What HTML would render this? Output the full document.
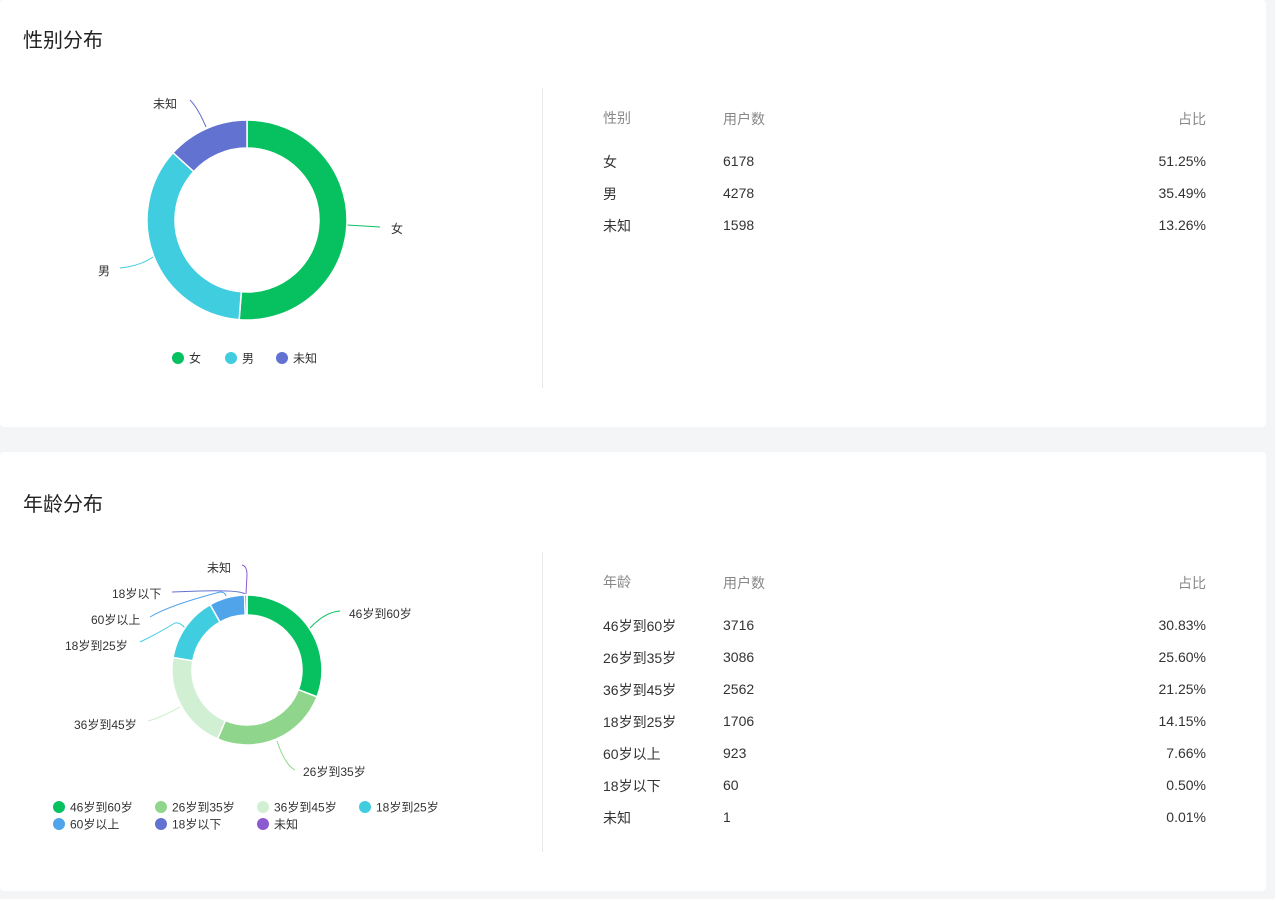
<!DOCTYPE html><html><head><meta charset="utf-8"><style>
body{margin:0;background:#f4f5f7;font-family:"Liberation Sans","Noto Sans CJK SC",sans-serif;width:1275px;height:899px;position:relative;overflow:hidden}
.card{position:absolute;left:0;width:1266px;background:#fff;border-radius:4px}
h2{position:absolute;left:23px;margin:0;font-size:20px;font-weight:normal;color:#222}
.div{position:absolute;left:542px;width:1px;background:#e8e8e8;height:300px}
.t{position:absolute;font-size:14px;color:#333}
.h{color:#888}
svg{position:absolute;left:0;top:0}
svg text{font-family:"Liberation Sans","Noto Sans CJK SC",sans-serif;font-size:12px;fill:#333}
</style></head><body>
<div class="card" style="top:0;height:427px"><h2 style="top:24px">性别分布</h2><div class="div" style="top:88px"></div></div>
<div class="card" style="top:452px;height:439px"><h2 style="top:36px">年龄分布</h2><div class="div" style="top:100px"></div></div>
<div id="tb"></div>
<svg width="1275" height="899" id="s">
<g fill="none" stroke-width="1">
<path d="M347 225 L380 227" stroke="#07c160"/>
<path d="M153 257 Q140 266 120 268" stroke="#40cde0"/>
<path d="M206 127 Q198 108 190 100" stroke="#6172d0"/>
<path d="M310 628 Q325 612 340 611" stroke="#07c160"/>
<path d="M277 741 Q285 765 295 770" stroke="#8fd68c"/>
<path d="M180 707 Q160 718 148 721" stroke="#d1efd2"/>
<path d="M185 628 Q180 622 175 623 Q155 635 140 642" stroke="#40cde0"/>
<path d="M226 596 Q225 592 220 592 Q170 605 150 617" stroke="#4fa4ea"/>
<path d="M245 594 Q240 590 200 591 L172 592" stroke="#6172d0"/>
<path d="M246 594 L247 575 Q247 566 242 565" stroke="#8c5ad0"/>
</g>
<text x="391" y="233">女</text><text x="98" y="275">男</text><text x="153" y="108">未知</text>
<text x="349" y="618">46岁到60岁</text><text x="303" y="776">26岁到35岁</text><text x="74" y="729">36岁到45岁</text>
<text x="65" y="650">18岁到25岁</text><text x="91" y="624">60岁以上</text><text x="112" y="598">18岁以下</text><text x="207" y="572">未知</text>
</svg>
<script>
const s=document.getElementById('s'),NS='http://www.w3.org/2000/svg';
function donut(cx,cy,R,r,data){let a=0;data.forEach(([v,c])=>{const b=a+v*2*Math.PI;const p=(t,rr)=>[cx+rr*Math.sin(t),cy-rr*Math.cos(t)];const L=(b-a)>Math.PI?1:0;const[x1,y1]=p(a,R),[x2,y2]=p(b,R),[x3,y3]=p(b,r),[x4,y4]=p(a,r);const e=document.createElementNS(NS,'path');e.setAttribute('d',`M${x1} ${y1}A${R} ${R} 0 ${L} 1 ${x2} ${y2}L${x3} ${y3}A${r} ${r} 0 ${L} 0 ${x4} ${y4}Z`);e.setAttribute('fill',c);e.setAttribute('stroke','#fff');e.setAttribute('stroke-width','1.5');s.appendChild(e);a=b;});}
donut(247,220,100,72,[[.5125,'#07c160'],[.3549,'#40cde0'],[.1326,'#6172d0']]);
donut(247,670,75,55,[[.3083,'#07c160'],[.2560,'#8fd68c'],[.2125,'#d1efd2'],[.1415,'#40cde0'],[.0766,'#4fa4ea'],[.0050,'#6172d0'],[.0001,'#8c5ad0']]);
function leg(items){items.forEach(([x,y,c,t])=>{const ci=document.createElementNS(NS,'circle');ci.setAttribute('cx',x);ci.setAttribute('cy',y);ci.setAttribute('r',6);ci.setAttribute('fill',c);s.appendChild(ci);const tx=document.createElementNS(NS,'text');tx.setAttribute('x',x+11);tx.setAttribute('y',y+4.5);tx.textContent=t;s.appendChild(tx);});}
leg([[178,358,'#07c160','女'],[231,358,'#40cde0','男'],[282,358,'#6172d0','未知'],
[59,807,'#07c160','46岁到60岁'],[161,807,'#8fd68c','26岁到35岁'],[263,807,'#d1efd2','36岁到45岁'],[365,807,'#40cde0','18岁到25岁'],
[59,824,'#4fa4ea','60岁以上'],[161,824,'#6172d0','18岁以下'],[263,824,'#8c5ad0','未知']]);
let h='';function row(y,a,b,c,cls){h+=`<div class="t ${cls}" style="left:603px;top:${y}px">${a}</div><div class="t ${cls}" style="left:723px;top:${y+1}px">${b}</div><div class="t ${cls}" style="right:69px;top:${y+1}px">${c}</div>`;}
row(108,'性别','用户数','占比','h');[['女',6178,'51.25%'],['男',4278,'35.49%'],['未知',1598,'13.26%']].forEach((r,i)=>row(152+32*i,...r,''));
row(572,'年龄','用户数','占比','h');[['46岁到60岁',3716,'30.83%'],['26岁到35岁',3086,'25.60%'],['36岁到45岁',2562,'21.25%'],['18岁到25岁',1706,'14.15%'],['60岁以上',923,'7.66%'],['18岁以下',60,'0.50%'],['未知',1,'0.01%']].forEach((r,i)=>row(616+32*i,...r,''));
document.getElementById('tb').innerHTML=h;
</script>
</body></html>
